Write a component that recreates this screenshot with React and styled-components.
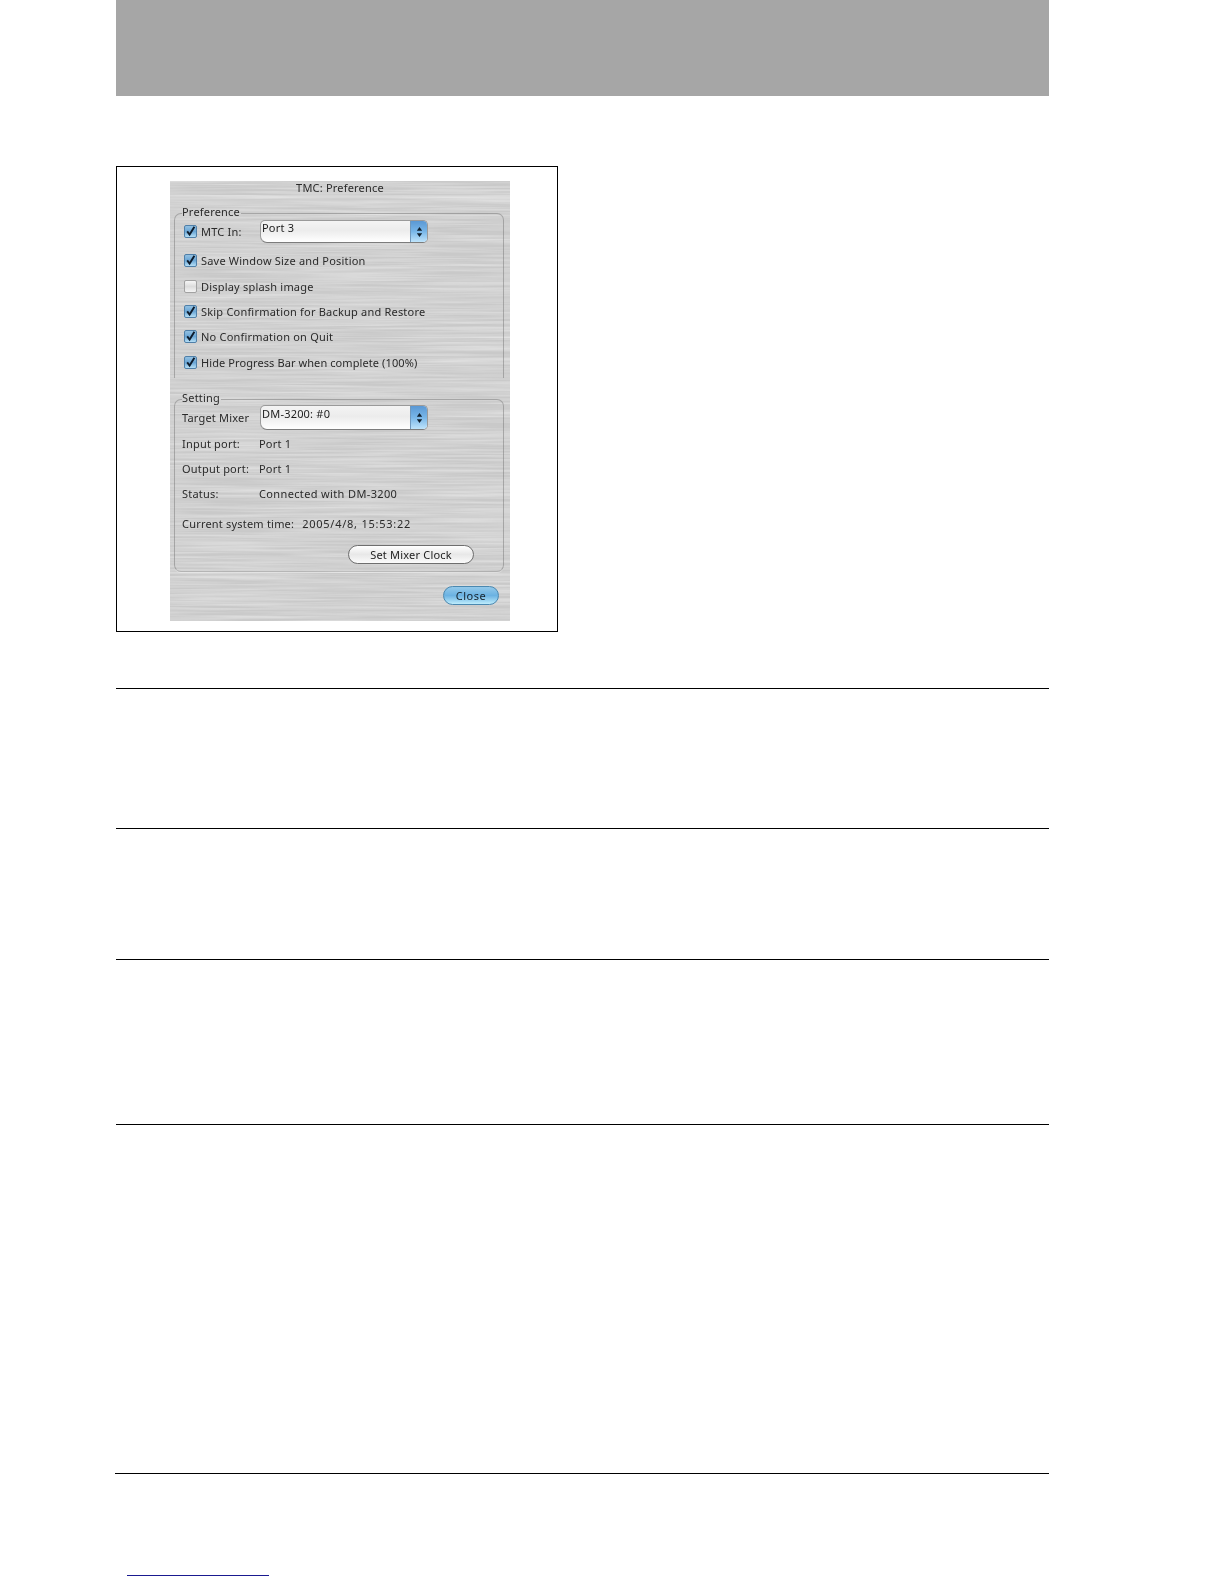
import React from 'react';
import styled, { createGlobalStyle } from 'styled-components';

const GlobalStyle = createGlobalStyle`
  html, body {
    margin: 0;
    padding: 0;
    background: #fff;
  }
`;

const Page = styled.div`
  width: 1224px;
  height: 1584px;
  overflow: hidden;
  padding-left: 116px;
  box-sizing: border-box;
  display: flex;
  flex-direction: column;
`;

const HeaderBand = styled.div`
  width: 933px;
  height: 96px;
  background: #a6a6a6;
`;

const Figure = styled.div`
  width: 442px;
  height: 466px;
  margin-top: 70px;
  box-sizing: border-box;
  border: 1px solid #000;
  padding: 14px 0 0 53px;
`;

const Rule = styled.div`
  width: ${p => p.$wide ? 934 : 933}px;
  height: 1px;
  background: #000;
  margin-top: ${p => p.$top}px;
  margin-left: ${p => p.$wide ? -1 : 0}px;
`;

const LinkLine = styled.div`
  width: 142px;
  height: 1px;
  margin-top: 101px;
  margin-left: 11px;
  background: #1a1a90;
`;

const Window = styled.div`
  position: relative;
  width: 340px;
  height: 440px;
  background: #c9c9c9;
  font-family: "Noto Sans", "DejaVu Sans", sans-serif;
  font-size: 11px;
  letter-spacing: 0.2px;
  color: #2a2a2a;
  filter: blur(0.45px);
  overflow: hidden;
`;

const Metal = styled.svg`
  position: absolute;
  inset: 0;
  width: 100%;
  height: 100%;
`;

const Content = styled.div`
  position: relative;
  display: flex;
  flex-direction: column;
  height: 100%;
  padding: 0 5px 0 4px;
  box-sizing: border-box;
`;

const TitleBar = styled.div`
  height: 14px;
  line-height: 14px;
  text-align: center;
  margin: 0 -5px 9px -4px;
  box-shadow: 0 -6px 8px 8px rgba(255, 255, 255, 0.3);
`;

const Group = styled.fieldset`
  margin: ${p => p.$top}px 0 0;
  padding: 0 6px ${p => p.$bottom}px 7px;
  width: 330px;
  box-sizing: border-box;
  min-width: 0;
  border: 1px solid rgba(120, 120, 120, 0.5);
  border-bottom: ${p => p.$open ? 'none' : '1px solid rgba(120, 120, 120, 0.3)'};
  border-radius: ${p => p.$open ? '7px 7px 0 0' : '7px'};
  box-shadow: ${p => p.$open ? 'none' : '0 1px 0 rgba(255, 255, 255, 0.35)'};
`;

const Legend = styled.legend`
  padding: 0 1px 4px 0;
  line-height: 13px;
`;

const Row = styled.div`
  display: flex;
  align-items: center;
  height: ${p => p.$height || 25.4}px;
  margin-top: ${p => p.$top || 0}px;
  white-space: nowrap;
`;

const CheckBox = styled.span`
  width: 11px;
  height: 11px;
  flex: none;
  margin-left: 2px;
  margin-right: 4px;
  border-radius: 2px;
  border: 1px solid ${p => p.$on ? '#4f7fa8' : '#a2a2a2'};
  background: ${p => p.$on
    ? 'linear-gradient(#93c1e2, #6aa6d6 50%, #b4def5)'
    : 'linear-gradient(#f6f6f6, #dcdcdc 50%, #f4f4f4)'};
  display: flex;
  align-items: center;
  justify-content: center;
`;

const CheckLabel = styled.span`
  min-width: ${p => p.$min || 0}px;
  letter-spacing: ${p => p.$spacing ?? 0.2}px;
`;

const FieldLabel = styled.span`
  width: 77px;
  flex: none;
`;

const TimeLabel = styled.span`
  margin-right: 8px;
`;

const WideValue = styled.span`
  letter-spacing: ${p => p.$spacing}px;
`;

const Select = styled.div`
  width: 168px;
  height: ${p => p.$height}px;
  margin-left: ${p => p.$left || 0}px;
  flex: none;
  box-sizing: border-box;
  display: flex;
  border: 1px solid #9a9a9a;
  border-bottom-color: #7c7c7c;
  border-radius: 5px 5px 5px 7px;
  overflow: hidden;
  background: linear-gradient(#f4f4f4, #ececec 45%, #ffffff);
`;

const SelectText = styled.span`
  flex: 1;
  padding: ${p => p.$pad || 0}px 0 0 1px;
  line-height: 13px;
  color: #1c1c1c;
`;

const Stepper = styled.span`
  width: 16px;
  flex: none;
  display: flex;
  align-items: center;
  justify-content: center;
  background: linear-gradient(#5a98d4, #78b6e8 50%, #bfe4fb);
  border-left: 1px solid #7098bc;
`;

const ButtonRow = styled.div`
  display: flex;
  justify-content: flex-end;
  margin-top: ${p => p.$top}px;
  padding-right: ${p => p.$right}px;
`;

const PillButton = styled.div`
  width: 126px;
  height: 19px;
  line-height: 18px;
  box-sizing: border-box;
  text-align: center;
  border: 1px solid #6e6e6e;
  border-radius: 10px;
  background: linear-gradient(#ffffff, #e8e8e8 50%, #fbfbfb);
  color: #222;
`;

const CloseButton = styled.div`
  width: 56px;
  height: 19px;
  line-height: 18px;
  box-sizing: border-box;
  text-align: center;
  border: 1px solid #4a88b0;
  border-radius: 10px;
  background: linear-gradient(#93c9ea, #6bb2e2 50%, #bdecfc);
  color: #15222c;
  letter-spacing: 0.5px;
`;

function Tick() {
  return (
    <svg width="11" height="11" viewBox="0 0 11 11">
      <path d="M2.2 5.4 L4.6 8.6 L9.4 0.8" fill="none" stroke="#0e1c2c" strokeWidth="1.9" />
    </svg>
  );
}

function Arrows() {
  return (
    <svg width="7" height="12" viewBox="0 0 7 12">
      <path d="M3.5 1 L6.2 4.8 H0.8 Z M3.5 11 L6.2 7.2 H0.8 Z" fill="#10202e" />
    </svg>
  );
}

function CheckRow({ on = true, label, top, spacing }) {
  return (
    <Row $top={top}>
      <CheckBox $on={on}>{on && <Tick />}</CheckBox>
      <CheckLabel $spacing={spacing}>{label}</CheckLabel>
    </Row>
  );
}

function Dropdown({ value, height, left, pad }) {
  return (
    <Select $height={height} $left={left}>
      <SelectText $pad={pad}>{value}</SelectText>
      <Stepper><Arrows /></Stepper>
    </Select>
  );
}

export default function App() {
  return (
    <>
      <GlobalStyle />
      <Page>
        <HeaderBand />
        <Figure>
          <Window>
            <Metal aria-hidden="true">
              <filter id="brushed" x="0" y="0" width="100%" height="100%">
                <feTurbulence type="fractalNoise" baseFrequency="0.008 0.45" numOctaves="3" seed="4" />
                <feColorMatrix type="matrix" values="0 0 0 0 1  0 0 0 0 1  0 0 0 0 1  0.7 0 0 0 -0.2" />
              </filter>
              <rect width="100%" height="100%" filter="url(#brushed)" />
            </Metal>
            <Content>
              <TitleBar>TMC: Preference</TitleBar>
              <Group $top={1} $bottom={3} $open>
                <Legend>Preference</Legend>
                <Row $height={23} $top={-2}>
                  <CheckBox $on><Tick /></CheckBox>
                  <CheckLabel $min={59}>MTC In:</CheckLabel>
                  <Dropdown value="Port 3" height={23} />
                </Row>
                <CheckRow top={5} label="Save Window Size and Position" />
                <CheckRow on={false} label="Display splash image" />
                <CheckRow label="Skip Confirmation for Backup and Restore" />
                <CheckRow label="No Confirmation on Quit" />
                <CheckRow label="Hide Progress Bar when complete (100%)" spacing={0.09} />
              </Group>
              <Group $top={13} $bottom={7}>
                <Legend>Setting</Legend>
                <Row $height={24} $top={-2}>
                  <FieldLabel>Target Mixer</FieldLabel>
                  <Dropdown value="DM-3200: #0" height={25} left={1} pad={1} />
                </Row>
                <Row $height={25} $top={1}><FieldLabel>Input port:</FieldLabel>Port 1</Row>
                <Row $height={25}><FieldLabel>Output port:</FieldLabel>Port 1</Row>
                <Row $height={25}>
                  <FieldLabel>Status:</FieldLabel>
                  <WideValue $spacing={0.36}>Connected with DM-3200</WideValue>
                </Row>
                <Row $height={25} $top={5.5}>
                  <TimeLabel>Current system time:</TimeLabel>
                  <WideValue $spacing={0.75}>2005/4/8, 15:53:22</WideValue>
                </Row>
                <ButtonRow $top={8.5} $right={23}>
                  <PillButton>Set Mixer Clock</PillButton>
                </ButtonRow>
              </Group>
              <ButtonRow $top={14} $right={6}>
                <CloseButton>Close</CloseButton>
              </ButtonRow>
            </Content>
          </Window>
        </Figure>
        <Rule $top={56} />
        <Rule $top={139} />
        <Rule $top={130} />
        <Rule $top={164} />
        <Rule $top={348} $wide />
        <LinkLine />
      </Page>
    </>
  );
}
